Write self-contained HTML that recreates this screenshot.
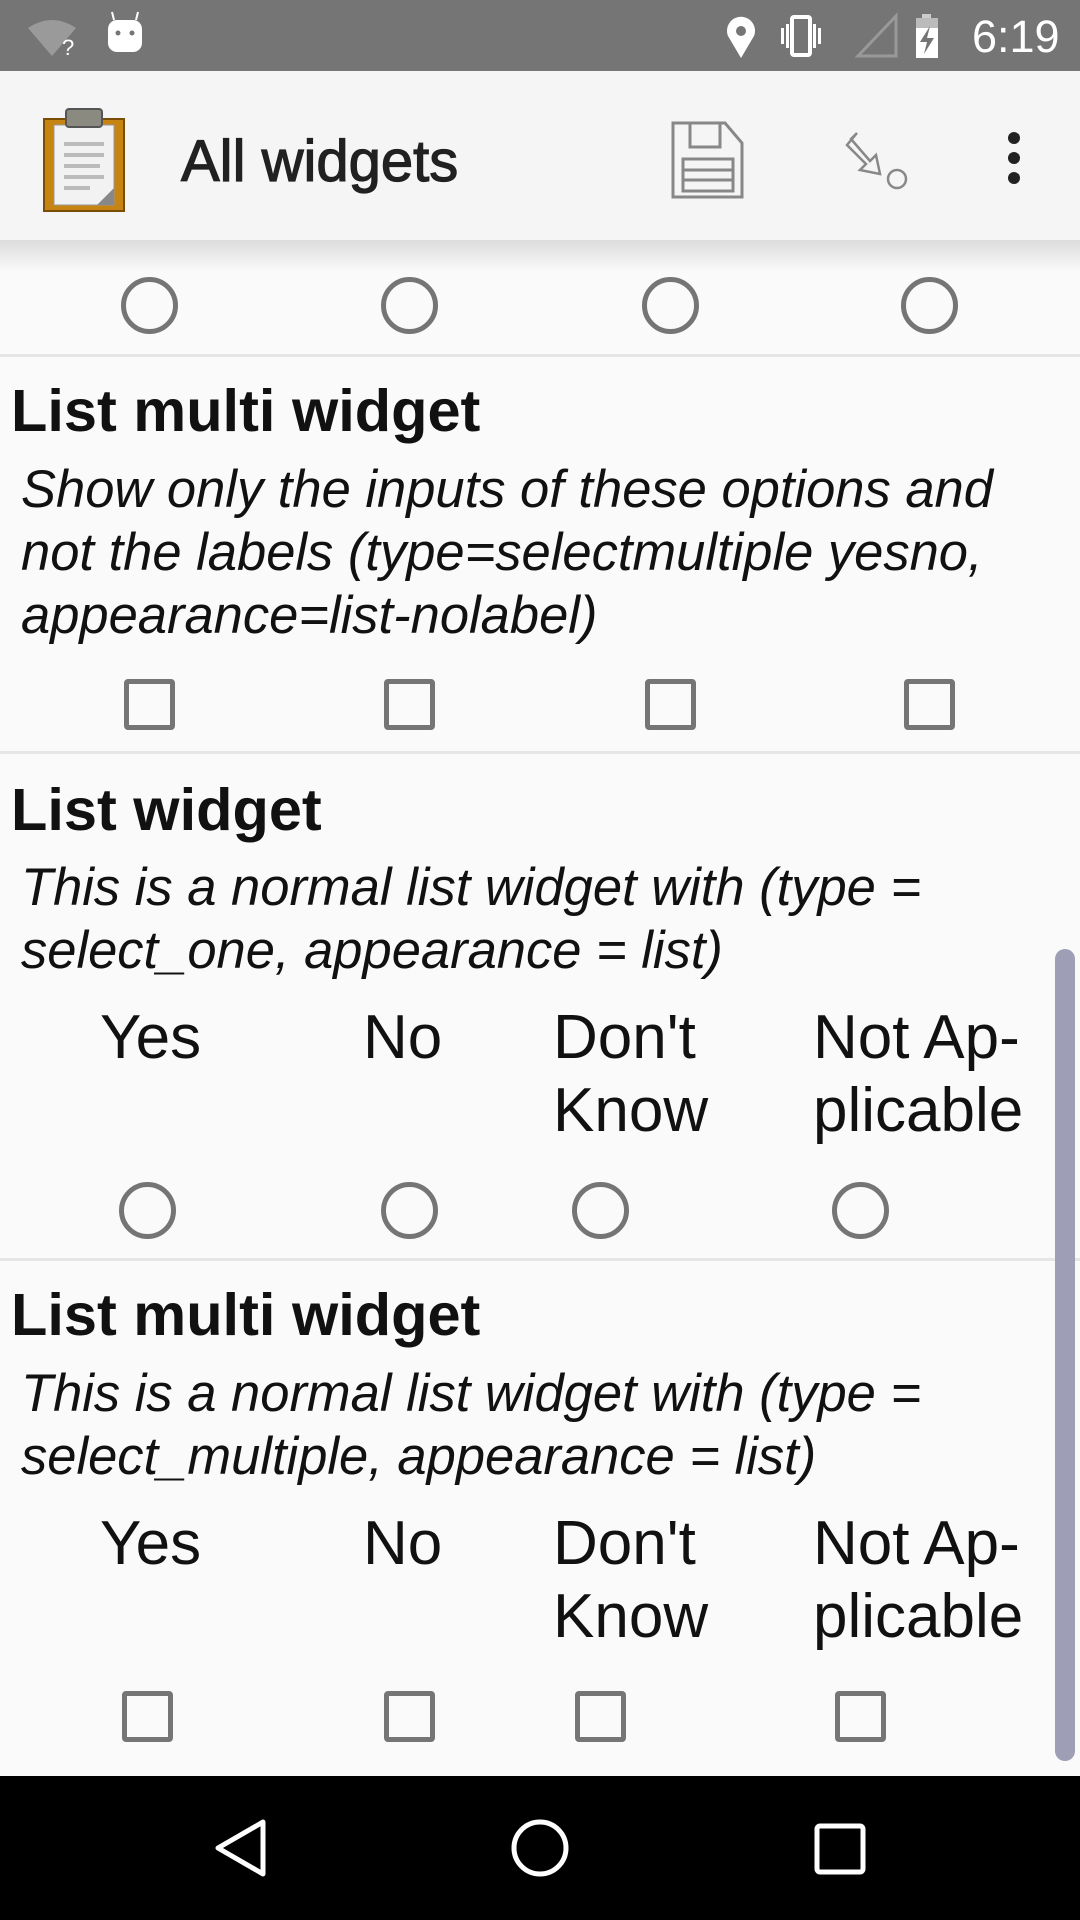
<!DOCTYPE html>
<html><head><meta charset="utf-8"><style>
html,body{margin:0;padding:0}
body{width:1080px;height:1920px;position:relative;overflow:hidden;background:#fafafa;font-family:"Liberation Sans",sans-serif;color:#000}
.a{position:absolute;white-space:nowrap}
.t{font-weight:bold;font-size:59.5px;line-height:64px;left:11px;color:#111}
.d{font-style:italic;font-size:52.5px;line-height:63px;left:21px;color:#111}
.l{font-size:62px;line-height:73px;color:#111}
.r{position:absolute;width:57px;height:57px;border:5px solid #757575;border-radius:50%;box-sizing:border-box}
.c{position:absolute;width:51px;height:51px;border:5px solid #757575;border-radius:4px;box-sizing:border-box}
.hr{position:absolute;left:0;width:1080px;height:3px;background:#e6e6e6}
</style></head><body>
<!-- status bar -->
<div class="a" style="left:0;top:0;width:1080px;height:71px;background:#757575"></div>
<svg class="a" style="left:0;top:0" width="1080" height="71">
<path d="M28 28 Q52 12 76 28 L52 56 Z" fill="#9a9a9a"/>
<text x="62" y="55" font-size="22" fill="#fff" font-family="Liberation Sans">?</text>
<rect x="108" y="20" width="34" height="32" rx="9" fill="#fff"/>
<line x1="114" y1="20" x2="112" y2="12" stroke="#fff" stroke-width="2"/><line x1="136" y1="20" x2="138" y2="12" stroke="#fff" stroke-width="2"/>
<circle cx="118" cy="33" r="2.5" fill="#757575"/><circle cx="132" cy="33" r="2.5" fill="#757575"/>
<path d="M741 58 L728 36 A14 14 0 1 1 754 36 Z" fill="#fff"/><circle cx="741" cy="31" r="5" fill="#757575"/>
<rect x="792" y="17" width="18" height="38" rx="2" fill="none" stroke="#fff" stroke-width="4"/>
<rect x="781" y="28" width="3" height="16" fill="#fff"/><rect x="786" y="24" width="3" height="24" fill="#fff"/>
<rect x="813" y="24" width="3" height="24" fill="#fff"/><rect x="818" y="28" width="3" height="16" fill="#fff"/>
<path d="M858 56 L896 16 L896 56 Z" fill="none" stroke="#999" stroke-width="3"/>
<rect x="922" y="14" width="9" height="5" fill="#ccc"/>
<rect x="916" y="18" width="22" height="40" fill="#fff"/><rect x="916" y="18" width="22" height="10" fill="#bbb"/>
<path d="M930 26 L920 42 L927 42 L924 54 L934 38 L927 38 Z" fill="#757575"/>
<text x="972" y="52" font-size="45" fill="#fff" font-family="Liberation Sans">6:19</text>
</svg>
<!-- toolbar -->
<div class="a" style="left:0;top:71px;width:1080px;height:169px;background:#f5f5f5"></div>
<div class="a" style="left:0;top:240px;width:1080px;height:32px;background:linear-gradient(#dcdcdc,#fafafa)"></div>
<svg class="a" style="left:0;top:71px" width="1080" height="169">
<rect x="44" y="48" width="80" height="92" fill="#c68412" stroke="#7a4d06" stroke-width="2"/>
<rect x="54" y="54" width="60" height="80" fill="#f2f2f2" stroke="#999" stroke-width="1"/>
<rect x="66" y="38" width="36" height="18" rx="3" fill="#8a8a80" stroke="#555" stroke-width="2"/>
<g fill="#bbb"><rect x="64" y="71" width="40" height="4"/><rect x="64" y="82" width="40" height="4"/><rect x="64" y="93" width="36" height="4"/><rect x="64" y="104" width="40" height="4"/><rect x="64" y="115" width="26" height="4"/></g>
<path d="M114 117 L114 134 L97 134 Z" fill="#888"/>
<text x="181" y="110" font-size="58" fill="#212121" stroke="#212121" stroke-width="1.2" font-family="Liberation Sans">All widgets</text>
<path d="M673 52 L725 52 L742 72 L742 126 L673 126 Z" fill="none" stroke="#888" stroke-width="3"/>
<rect x="690" y="52" width="30" height="24" fill="none" stroke="#888" stroke-width="3"/>
<rect x="683" y="88" width="50" height="32" fill="none" stroke="#888" stroke-width="3"/>
<line x1="683" y1="99" x2="733" y2="99" stroke="#888" stroke-width="3"/><line x1="683" y1="109" x2="733" y2="109" stroke="#888" stroke-width="3"/>
<path d="M857 62 L847 74 L866 93 L860 99 L880 103 L876 84 L870 90 L851 68 Z" fill="none" stroke="#888" stroke-width="2.5"/>
<circle cx="897" cy="108" r="9" fill="none" stroke="#888" stroke-width="2.5"/>
<circle cx="1014" cy="67" r="6" fill="#222"/><circle cx="1014" cy="87" r="6" fill="#222"/><circle cx="1014" cy="107" r="6" fill="#222"/>
</svg>
<!-- row1 radios -->
<div class="r" style="left:121px;top:277px"></div><div class="r" style="left:381px;top:277px"></div><div class="r" style="left:642px;top:277px"></div><div class="r" style="left:901px;top:277px"></div>
<div class="hr" style="top:354px"></div>
<div class="a t" style="top:379px">List multi widget</div>
<div class="a d" style="top:458px">Show only the inputs of these options and<br>not the labels (type=selectmultiple yesno,<br>appearance=list-nolabel)</div>
<div class="c" style="left:124px;top:679px"></div><div class="c" style="left:384px;top:679px"></div><div class="c" style="left:645px;top:679px"></div><div class="c" style="left:904px;top:679px"></div>
<div class="hr" style="top:751px"></div>
<div class="a t" style="top:778px">List widget</div>
<div class="a d" style="top:856px">This is a normal list widget with (type =<br>select_one, appearance = list)</div>
<div class="a l" style="left:100px;top:1001px">Yes</div>
<div class="a l" style="left:363px;top:1001px">No</div>
<div class="a l" style="left:553px;top:1001px">Don't<br>Know</div>
<div class="a l" style="left:813px;top:1001px">Not Ap-<br>plicable</div>
<div class="r" style="left:119px;top:1182px"></div><div class="r" style="left:381px;top:1182px"></div><div class="r" style="left:572px;top:1182px"></div><div class="r" style="left:832px;top:1182px"></div>
<div class="hr" style="top:1258px"></div>
<div class="a t" style="top:1283px">List multi widget</div>
<div class="a d" style="top:1362px">This is a normal list widget with (type =<br>select_multiple, appearance = list)</div>
<div class="a l" style="left:100px;top:1507px">Yes</div>
<div class="a l" style="left:363px;top:1507px">No</div>
<div class="a l" style="left:553px;top:1507px">Don't<br>Know</div>
<div class="a l" style="left:813px;top:1507px">Not Ap-<br>plicable</div>
<div class="c" style="left:122px;top:1691px"></div><div class="c" style="left:384px;top:1691px"></div><div class="c" style="left:575px;top:1691px"></div><div class="c" style="left:835px;top:1691px"></div>
<!-- scrollbar -->
<div class="a" style="left:1055px;top:949px;width:20px;height:812px;background:#9e9eb6;border-radius:10px"></div>
<!-- nav bar -->
<div class="a" style="left:0;top:1776px;width:1080px;height:144px;background:#000"></div>
<svg class="a" style="left:0;top:1776px" width="1080" height="144">
<path d="M263 46 L263 98 L218 72 Z" fill="none" stroke="#fff" stroke-width="5" stroke-linejoin="round"/>
<circle cx="540" cy="72" r="26" fill="none" stroke="#fff" stroke-width="5"/>
<rect x="817" y="50" width="46" height="46" rx="3" fill="none" stroke="#fff" stroke-width="5"/>
</svg>
</body></html>
